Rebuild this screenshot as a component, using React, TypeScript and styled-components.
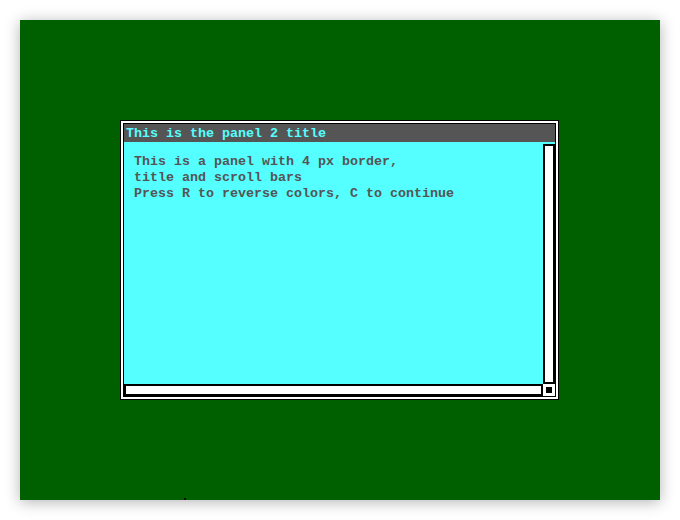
import React from "react";
import styled, { createGlobalStyle } from "styled-components";

const Global = createGlobalStyle`
  html, body { margin: 0; padding: 0; background: #ffffff; }
  body { padding: 20px; font-family: "Liberation Mono", "DejaVu Sans Mono", monospace; }
`;

const Screen = styled.div`
  position: relative;
  width: 640px;
  height: 480px;
  background: #006000;
  box-shadow: 0 2px 14px rgba(0, 0, 0, 0.3);
  display: flex;
  align-items: center;
  justify-content: center;
`;

const Panel = styled.div`
  box-sizing: border-box;
  width: 439px;
  height: 280px;
  border: 1px solid #000;
  background: #fff;
  padding: 2px;
  display: flex;
  margin-left: -1px;
`;

const Frame = styled.div`
  flex: 1;
  border: 1px solid #000;
  background: #55ffff;
  display: grid;
  grid-template-rows: 18px 1fr 12px;
  grid-template-columns: 1fr 12px;
  min-width: 0;
`;

const Title = styled.div`
  grid-column: 1 / 3;
  box-sizing: border-box;
  background: #555555;
  color: #55ffff;
  font-family: "Liberation Mono", "DejaVu Sans Mono", monospace;
  font-weight: bold;
  font-size: 13.33px;
  line-height: 17px;
  padding: 1px 0 0 2px;
  white-space: pre;
`;

const Body = styled.div`
  padding: 12px 0 0 10px;
  color: #555555;
  font-family: "Liberation Mono", "DejaVu Sans Mono", monospace;
  font-weight: bold;
  font-size: 13.33px;
  line-height: 16px;
  white-space: pre;
  overflow: hidden;
`;

const VScroll = styled.div`
  box-sizing: border-box;
  margin-top: 2px;
  border: 2px solid #000;
  background: #fff;
`;

const HScroll = styled.div`
  box-sizing: border-box;
  border: 2px solid #000;
  background: #fff;
`;

const Corner = styled.div`
  box-sizing: border-box;
  background: #fff;
  display: flex;
  align-items: center;
  justify-content: center;
`;

const Knob = styled.div`
  width: 6px;
  height: 6px;
  background: #000;
`;

const Cursor = styled.div`
  position: absolute;
  left: 164px;
  bottom: 0;
  width: 2px;
  height: 2px;
  background: #000;
`;

export default function App() {
  return (
    <>
      <Global />
      <Screen>
        <Panel>
          <Frame>
            <Title>This is the panel 2 title</Title>
            <Body>
              {"This is a panel with 4 px border,\ntitle and scroll bars\nPress R to reverse colors, C to continue"}
            </Body>
            <VScroll />
            <HScroll />
            <Corner>
              <Knob />
            </Corner>
          </Frame>
        </Panel>
        <Cursor />
      </Screen>
    </>
  );
}
